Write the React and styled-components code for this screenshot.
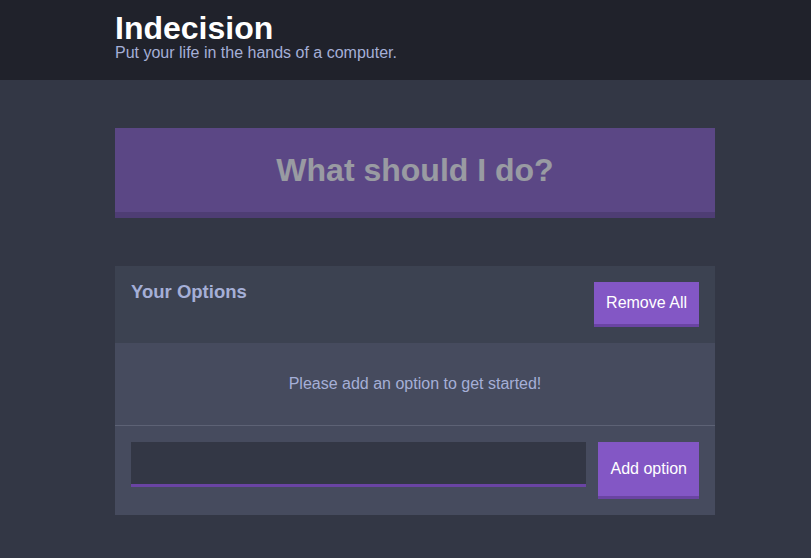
import styled, { createGlobalStyle } from "styled-components";

const GlobalStyle = createGlobalStyle`
  html, body {
    margin: 0;
    padding: 0;
    background: #333745;
    font-family: "Liberation Sans", Arial, sans-serif;
    overflow: hidden;
  }
  * { box-sizing: border-box; }
`;

// Header band
const Header = styled.header`
  background: #20222b;
  padding: 12px 0 18px;
  margin-bottom: 48px;
`;

const Container = styled.div`
  width: 600px;
  margin-left: 115px;
`;

const Title = styled.h1`
  margin: 0;
  color: #fff;
  font-size: 32px;
  line-height: 32px;
  font-weight: bold;
`;

const Subtitle = styled.h2`
  margin: 0;
  color: #a5afd7;
  font-size: 16px;
  line-height: 18px;
  font-weight: normal;
`;

// Big "what should I do" button
const BigButton = styled.button`
  display: block;
  width: 100%;
  background: #8357c5;
  border: none;
  border-bottom: 6px solid #6a44a3;
  color: #fff;
  font-family: inherit;
  font-size: 32px;
  line-height: 36px;
  font-weight: bold;
  padding: 24px;
  margin: 0 0 48px;
  &:disabled {
    opacity: 0.5;
    color: #fff;
  }
`;

const Widget = styled.div`
  background: #464b5e;
`;

const WidgetHeader = styled.div`
  background: #3c4251;
  display: flex;
  justify-content: space-between;
  align-items: flex-start;
  padding: 16px;
`;

const WidgetTitle = styled.h3`
  margin: 0;
  color: #a5afd7;
  font-size: 18.5px;
  line-height: 20px;
  font-weight: bold;
`;

const Button = styled.button`
  background: #8357c5;
  border: none;
  border-bottom: 3px solid #6a44a3;
  color: #fff;
  font-family: inherit;
  font-size: 16px;
  line-height: 18px;
  padding: 12px;
  white-space: nowrap;
`;

const Message = styled.p`
  margin: 0;
  padding: 32px;
  text-align: center;
  color: #a5afd7;
  font-size: 16px;
  line-height: 18px;
  border-bottom: 1px solid #5d6275;
`;

const AddForm = styled.form`
  display: flex;
  padding: 16px;
`;

const Input = styled.input`
  flex-grow: 1;
  background: #333745;
  border: none;
  border-bottom: 3px solid #6a44a3;
  color: #a5afd7;
  font-family: inherit;
  font-size: 16px;
  line-height: 18px;
  padding: 12px;
  margin: 0 12px 12px 0;
  outline: none;
`;

export default function App() {
  return (
    <>
      <GlobalStyle />
      <Header>
        <Container>
          <Title>Indecision</Title>
          <Subtitle>Put your life in the hands of a computer.</Subtitle>
        </Container>
      </Header>
      <Container>
        <BigButton disabled>What should I do?</BigButton>
        <Widget>
          <WidgetHeader>
            <WidgetTitle>Your Options</WidgetTitle>
            <Button>Remove All</Button>
          </WidgetHeader>
          <Message>Please add an option to get started!</Message>
          <AddForm onSubmit={(e) => e.preventDefault()}>
            <Input type="text" name="option" />
            <Button>Add option</Button>
          </AddForm>
        </Widget>
      </Container>
    </>
  );
}
